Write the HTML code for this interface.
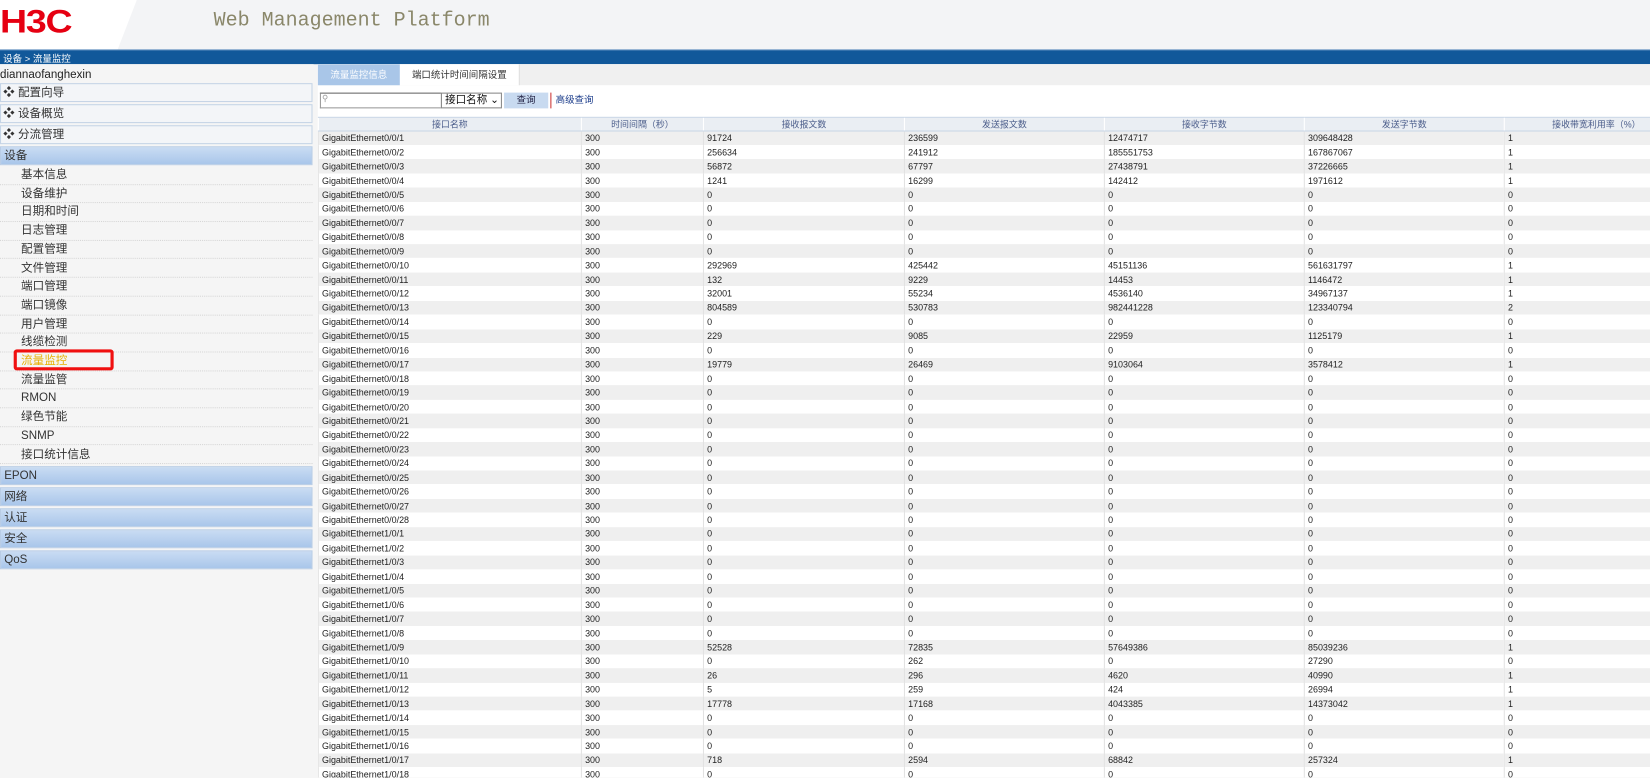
<!DOCTYPE html>
<html><head><meta charset="utf-8">
<style>
*{margin:0;padding:0;box-sizing:border-box}
body{width:1650px;height:778px;overflow:hidden;background:#f5f5f5;font-family:"Liberation Sans","Noto Sans CJK SC",sans-serif;position:relative}
#wrap{position:absolute;left:0;top:0;width:1568px;height:739px;transform:scale(1.0523);transform-origin:0 0;overflow:hidden}
#hdr{position:absolute;left:0;top:0;width:1568px;height:47px;background:#f3f4f6}
#logobg{position:absolute;left:0;top:0;height:47px;width:130px;background:#fff;clip-path:polygon(0 0,100% 0,86% 100%,0 100%)}
#logotxt{position:absolute;left:0;top:3px;font:bold 31px "Liberation Sans",sans-serif;color:#e60012;letter-spacing:-1px;transform:scaleX(1.15);transform-origin:left}
#title{position:absolute;left:203px;top:8px;font:19px "Liberation Mono",monospace;color:#8a876a}
#bar{position:absolute;left:0;top:47px;width:1568px;height:14px;background:#11589a;border-top:1px solid #5a8bbd}
#bar span{position:absolute;left:3px;top:1px;font-size:9px;color:#fff}
#side{position:absolute;left:0;top:61px;width:298px;height:678px;background:#f5f5f5;overflow:hidden}
.user{position:absolute;left:0;top:4px;font-size:11px;color:#222}
.mi{position:absolute;left:0;width:297px;height:18px;border:1px solid #c5d4e6;background:#f3f5f8;font-size:11px;color:#333;padding-left:2px;line-height:16px}
.cat{position:absolute;left:0;width:297px;height:18px;background:linear-gradient(#c9dcf3,#a9c6ea);border:1px solid #b9cde6;font-size:11px;color:#333;padding-left:3px;line-height:16px}
.sub{position:absolute;left:0;width:297px;height:17.7px;border-bottom:1px dotted #d6d6d6;font-size:11px;color:#333;padding-left:20px;line-height:17px}
#main{position:absolute;left:302px;top:61px;width:1266px;height:678px;background:#fff;overflow:hidden}
#tabs{position:absolute;left:0;top:0;width:1266px;height:20px;background:#f0f0f0}
.t1{position:absolute;left:0;top:0;width:78px;height:20px;background:#a9c6e8;color:#fff;font-size:9px;text-align:center;line-height:20px}
.t2{position:absolute;left:78px;top:0;width:114px;height:20px;background:#fff;color:#333;font-size:9px;text-align:center;line-height:20px;border-right:1px solid #ddd}
#inp{position:absolute;left:2px;top:27px;width:116px;height:15px;border:1px solid #999;border-top-color:#666;background:#fff}
#sel{position:absolute;left:117px;top:27px;width:58px;height:15px;border:1px solid #888;background:#fff;font-size:10px;line-height:13px;padding-left:3px;color:#111}
#btn{position:absolute;left:177px;top:27px;width:42px;height:15px;background:#c8daf0;font-size:9px;color:#224;text-align:center;line-height:15px}
#lnk{position:absolute;left:221px;top:27px;font-size:9px;color:#1a3b8a;line-height:15px;border-left:1px solid #c33;padding-left:4px}
table{position:absolute;left:0;top:50px;width:1348px;border-collapse:collapse;table-layout:fixed;font-size:8.5px;color:#222}
th{height:13px;background:#eaeef3;font-weight:normal;color:#4a5c8a;border-left:1px solid #fff;border-top:1px solid #c9d6e6;border-bottom:1px solid #c9d6e6}
td{height:13.45px;padding:0 3px;white-space:nowrap;overflow:hidden;border-left:1px solid #e2e2e2;line-height:12px}
tr:nth-child(odd) td{background:#efefef}
tr:nth-child(even) td{background:#fff}
</style></head><body>
<div id="wrap">
<div id="hdr"><div id="logobg"></div><div id="logotxt">H3C</div><div id="title">Web Management Platform</div></div>
<div id="bar"><span>设备 &gt; 流量监控</span></div>
<div id="side">
<div class="user">diannaofanghexin</div>
<div class="mi" style="top:18px">❖ 配置向导</div>
<div class="mi" style="top:38px">❖ 设备概览</div>
<div class="mi" style="top:58px">❖ 分流管理</div>
<div class="cat" style="top:78px">设备</div>
<div class="sub" style="top:97px">基本信息</div>
<div class="sub" style="top:114.7px">设备维护</div>
<div class="sub" style="top:132.4px">日期和时间</div>
<div class="sub" style="top:150.1px">日志管理</div>
<div class="sub" style="top:167.8px">配置管理</div>
<div class="sub" style="top:185.5px">文件管理</div>
<div class="sub" style="top:203.2px">端口管理</div>
<div class="sub" style="top:220.9px">端口镜像</div>
<div class="sub" style="top:238.6px">用户管理</div>
<div class="sub" style="top:256.3px">线缆检测</div>
<div class="sub" style="top:274px;color:#e8b000">流量监控</div>
<div style="position:absolute;left:13px;top:271px;width:95px;height:20px;border:3px solid #f01010;border-radius:3px"></div>
<div class="sub" style="top:291.7px">流量监管</div>
<div class="sub" style="top:309.4px">RMON</div>
<div class="sub" style="top:327.1px">绿色节能</div>
<div class="sub" style="top:344.8px">SNMP</div>
<div class="sub" style="top:362.5px">接口统计信息</div>
<div class="cat" style="top:382px">EPON</div>
<div class="cat" style="top:402px">网络</div>
<div class="cat" style="top:422px">认证</div>
<div class="cat" style="top:442px">安全</div>
<div class="cat" style="top:462px">QoS</div>
</div>
<div id="main">
<div id="tabs"><div class="t1">流量监控信息</div><div class="t2">端口统计时间间隔设置</div></div>
<div id="inp"><span style="font-size:8px;color:#999;position:absolute;left:1px;top:0">⚲</span></div>
<div id="sel">接口名称 ⌄</div>
<div id="btn">查询</div>
<div id="lnk">高级查询</div>
<table>
<colgroup><col style="width:250px"><col style="width:116px"><col style="width:191px"><col style="width:190px"><col style="width:190px"><col style="width:190px"><col style="width:221px"></colgroup>
<thead><tr><th>接口名称</th><th>时间间隔（秒）</th><th>接收报文数</th><th>发送报文数</th><th>接收字节数</th><th>发送字节数</th><th style="text-align:left;padding-left:45px">接收带宽利用率（%）</th></tr></thead>
<tbody>
<tr><td>GigabitEthernet0/0/1</td><td>300</td><td>91724</td><td>236599</td><td>12474717</td><td>309648428</td><td>1</td></tr>
<tr><td>GigabitEthernet0/0/2</td><td>300</td><td>256634</td><td>241912</td><td>185551753</td><td>167867067</td><td>1</td></tr>
<tr><td>GigabitEthernet0/0/3</td><td>300</td><td>56872</td><td>67797</td><td>27438791</td><td>37226665</td><td>1</td></tr>
<tr><td>GigabitEthernet0/0/4</td><td>300</td><td>1241</td><td>16299</td><td>142412</td><td>1971612</td><td>1</td></tr>
<tr><td>GigabitEthernet0/0/5</td><td>300</td><td>0</td><td>0</td><td>0</td><td>0</td><td>0</td></tr>
<tr><td>GigabitEthernet0/0/6</td><td>300</td><td>0</td><td>0</td><td>0</td><td>0</td><td>0</td></tr>
<tr><td>GigabitEthernet0/0/7</td><td>300</td><td>0</td><td>0</td><td>0</td><td>0</td><td>0</td></tr>
<tr><td>GigabitEthernet0/0/8</td><td>300</td><td>0</td><td>0</td><td>0</td><td>0</td><td>0</td></tr>
<tr><td>GigabitEthernet0/0/9</td><td>300</td><td>0</td><td>0</td><td>0</td><td>0</td><td>0</td></tr>
<tr><td>GigabitEthernet0/0/10</td><td>300</td><td>292969</td><td>425442</td><td>45151136</td><td>561631797</td><td>1</td></tr>
<tr><td>GigabitEthernet0/0/11</td><td>300</td><td>132</td><td>9229</td><td>14453</td><td>1146472</td><td>1</td></tr>
<tr><td>GigabitEthernet0/0/12</td><td>300</td><td>32001</td><td>55234</td><td>4536140</td><td>34967137</td><td>1</td></tr>
<tr><td>GigabitEthernet0/0/13</td><td>300</td><td>804589</td><td>530783</td><td>982441228</td><td>123340794</td><td>2</td></tr>
<tr><td>GigabitEthernet0/0/14</td><td>300</td><td>0</td><td>0</td><td>0</td><td>0</td><td>0</td></tr>
<tr><td>GigabitEthernet0/0/15</td><td>300</td><td>229</td><td>9085</td><td>22959</td><td>1125179</td><td>1</td></tr>
<tr><td>GigabitEthernet0/0/16</td><td>300</td><td>0</td><td>0</td><td>0</td><td>0</td><td>0</td></tr>
<tr><td>GigabitEthernet0/0/17</td><td>300</td><td>19779</td><td>26469</td><td>9103064</td><td>3578412</td><td>1</td></tr>
<tr><td>GigabitEthernet0/0/18</td><td>300</td><td>0</td><td>0</td><td>0</td><td>0</td><td>0</td></tr>
<tr><td>GigabitEthernet0/0/19</td><td>300</td><td>0</td><td>0</td><td>0</td><td>0</td><td>0</td></tr>
<tr><td>GigabitEthernet0/0/20</td><td>300</td><td>0</td><td>0</td><td>0</td><td>0</td><td>0</td></tr>
<tr><td>GigabitEthernet0/0/21</td><td>300</td><td>0</td><td>0</td><td>0</td><td>0</td><td>0</td></tr>
<tr><td>GigabitEthernet0/0/22</td><td>300</td><td>0</td><td>0</td><td>0</td><td>0</td><td>0</td></tr>
<tr><td>GigabitEthernet0/0/23</td><td>300</td><td>0</td><td>0</td><td>0</td><td>0</td><td>0</td></tr>
<tr><td>GigabitEthernet0/0/24</td><td>300</td><td>0</td><td>0</td><td>0</td><td>0</td><td>0</td></tr>
<tr><td>GigabitEthernet0/0/25</td><td>300</td><td>0</td><td>0</td><td>0</td><td>0</td><td>0</td></tr>
<tr><td>GigabitEthernet0/0/26</td><td>300</td><td>0</td><td>0</td><td>0</td><td>0</td><td>0</td></tr>
<tr><td>GigabitEthernet0/0/27</td><td>300</td><td>0</td><td>0</td><td>0</td><td>0</td><td>0</td></tr>
<tr><td>GigabitEthernet0/0/28</td><td>300</td><td>0</td><td>0</td><td>0</td><td>0</td><td>0</td></tr>
<tr><td>GigabitEthernet1/0/1</td><td>300</td><td>0</td><td>0</td><td>0</td><td>0</td><td>0</td></tr>
<tr><td>GigabitEthernet1/0/2</td><td>300</td><td>0</td><td>0</td><td>0</td><td>0</td><td>0</td></tr>
<tr><td>GigabitEthernet1/0/3</td><td>300</td><td>0</td><td>0</td><td>0</td><td>0</td><td>0</td></tr>
<tr><td>GigabitEthernet1/0/4</td><td>300</td><td>0</td><td>0</td><td>0</td><td>0</td><td>0</td></tr>
<tr><td>GigabitEthernet1/0/5</td><td>300</td><td>0</td><td>0</td><td>0</td><td>0</td><td>0</td></tr>
<tr><td>GigabitEthernet1/0/6</td><td>300</td><td>0</td><td>0</td><td>0</td><td>0</td><td>0</td></tr>
<tr><td>GigabitEthernet1/0/7</td><td>300</td><td>0</td><td>0</td><td>0</td><td>0</td><td>0</td></tr>
<tr><td>GigabitEthernet1/0/8</td><td>300</td><td>0</td><td>0</td><td>0</td><td>0</td><td>0</td></tr>
<tr><td>GigabitEthernet1/0/9</td><td>300</td><td>52528</td><td>72835</td><td>57649386</td><td>85039236</td><td>1</td></tr>
<tr><td>GigabitEthernet1/0/10</td><td>300</td><td>0</td><td>262</td><td>0</td><td>27290</td><td>0</td></tr>
<tr><td>GigabitEthernet1/0/11</td><td>300</td><td>26</td><td>296</td><td>4620</td><td>40990</td><td>1</td></tr>
<tr><td>GigabitEthernet1/0/12</td><td>300</td><td>5</td><td>259</td><td>424</td><td>26994</td><td>1</td></tr>
<tr><td>GigabitEthernet1/0/13</td><td>300</td><td>17778</td><td>17168</td><td>4043385</td><td>14373042</td><td>1</td></tr>
<tr><td>GigabitEthernet1/0/14</td><td>300</td><td>0</td><td>0</td><td>0</td><td>0</td><td>0</td></tr>
<tr><td>GigabitEthernet1/0/15</td><td>300</td><td>0</td><td>0</td><td>0</td><td>0</td><td>0</td></tr>
<tr><td>GigabitEthernet1/0/16</td><td>300</td><td>0</td><td>0</td><td>0</td><td>0</td><td>0</td></tr>
<tr><td>GigabitEthernet1/0/17</td><td>300</td><td>718</td><td>2594</td><td>68842</td><td>257324</td><td>1</td></tr>
<tr><td>GigabitEthernet1/0/18</td><td>300</td><td>0</td><td>0</td><td>0</td><td>0</td><td>0</td></tr>
</tbody></table>
</div>
</div>
</body></html>
